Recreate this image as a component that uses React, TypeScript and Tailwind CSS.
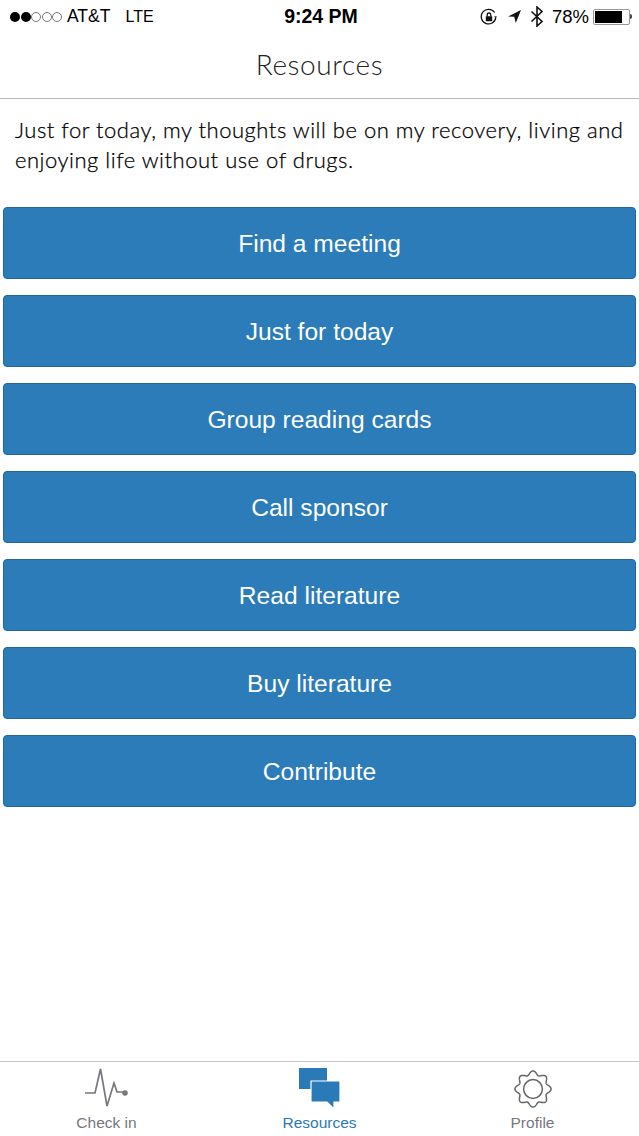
const resources = [
  'Find a meeting',
  'Just for today',
  'Group reading cards',
  'Call sponsor',
  'Read literature',
  'Buy literature',
  'Contribute',
];

function gearPath() {
  const points: string[] = [];
  for (let i = 0; i < 240; i++) {
    const t = (i / 240) * Math.PI * 2;
    const r = 16.2 + 1.9 * Math.cos(8 * t);
    points.push(`${(20 + r * Math.sin(t)).toFixed(2)},${(20 - r * Math.cos(t)).toFixed(2)}`);
  }
  return `M${points.join('L')}Z`;
}

function StatusBar() {
  return (
    <div className="flex h-[32px] items-center justify-between pl-[10px] pr-[7px] pt-[1px] font-['Liberation_Sans',sans-serif] text-[17.5px] text-black">
      <div className="flex w-[220px] items-center">
        <div className="flex items-center gap-[0.5px]">
          <span className="size-[10px] rounded-full bg-black" />
          <span className="size-[10px] rounded-full bg-black" />
          <span className="size-[10px] rounded-full border border-[#777]" />
          <span className="size-[10px] rounded-full border border-[#777]" />
          <span className="size-[10px] rounded-full border border-[#777]" />
        </div>
        <span className="ml-[5px]">AT&amp;T</span>
        <span className="ml-[15px] text-[16px]">LTE</span>
      </div>
      <div className="text-[19.5px] font-bold">9:24 PM</div>
      <div className="flex w-[220px] items-center justify-end">
        <svg width="18" height="18" viewBox="0 0 18 18" fill="none" stroke="#111" strokeWidth="1.3">
          <path d="M15.8 9.6A7.3 7.3 0 1 1 14.6 4.5" />
          <path d="M16.9 8.2l-1.2 2-1.7-1.6" fill="#111" stroke="none" />
          <rect x="5.8" y="8.2" width="6.4" height="5" rx="0.6" fill="#111" stroke="none" />
          <path d="M7.2 8.4V6.8a1.8 1.8 0 0 1 3.6 0v1.6" />
        </svg>
        <svg className="ml-[9px]" width="15" height="15" viewBox="0 0 15 15" fill="#111">
          <path d="M14 1L8.8 14 7.2 7.8 1 7.4z" />
        </svg>
        <svg className="ml-[8px]" width="14" height="21" viewBox="0 0 14 21" fill="none" stroke="#111" strokeWidth="1.6">
          <path d="M1.5 5.5l10.5 10L7 20V1l5 4.5L1.5 15.5" />
        </svg>
        <span className="ml-[8px] text-[18.5px]">78%</span>
        <div className="ml-[4px] flex items-center">
          <div className="h-[16px] w-[37px] rounded-[2px] border border-[#999] bg-white p-[1px]">
            <div className="h-full w-[27px] bg-black" />
          </div>
          <div className="h-[5px] w-[2px] rounded-r-[2px] bg-[#444]" />
        </div>
      </div>
    </div>
  );
}

function TabItem({ label, active, icon }: { label: string; active?: boolean; icon: React.ReactNode }) {
  return (
    <div className={`flex flex-col items-center pt-[4px] ${active ? 'text-[#2a7ab8]' : 'text-[#77777c]'}`}>
      <div className="flex h-[46px] items-center justify-center">{icon}</div>
      <span className="mt-[2px] text-[15.5px] leading-[18px]">{label}</span>
    </div>
  );
}

export default function App() {
  return (
    <div className="flex h-[1136px] w-[639px] flex-col overflow-hidden bg-white">
      <StatusBar />
      <header className="flex h-[67px] items-center justify-center border-b border-[#b9b9bb] pb-[2px] font-['Lato',sans-serif] text-[28px] font-light tracking-[0.6px] text-[#222]">
        Resources
      </header>
      <p className="px-[15px] pt-[16px] font-['Lato',sans-serif] text-[22px] font-light leading-[30px] tracking-[0.52px] text-black [-webkit-text-stroke:0.25px_black]">
        Just for today, my thoughts will be on my recovery, living and enjoying life without use of drugs.
      </p>
      <div className="mt-[32px] flex flex-col gap-[16px] px-[3px]">
        {resources.map((label) => (
          <button
            key={label}
            className="h-[72px] rounded-[4px] border border-[#22689f] bg-[#2b7cb9] pt-[3px] font-['Liberation_Sans',sans-serif] text-[24.6px] text-white"
          >
            {label}
          </button>
        ))}
      </div>
      <nav className="mt-auto grid h-[75px] grid-cols-3 border-t border-[#c4c4c6] font-['Liberation_Sans',sans-serif]">
        <TabItem
          label="Check in"
          icon={
            <svg width="46" height="42" viewBox="0 0 46 42" fill="none" stroke="#77777c" strokeWidth="1.7">
              <path d="M1 25h10l5.5-24 6.5 37 7-23 3 9h9" />
              <circle cx="41" cy="25" r="2.8" fill="#77777c" stroke="none" />
            </svg>
          }
        />
        <TabItem
          label="Resources"
          active
          icon={
            <svg width="42" height="42" viewBox="0 0 42 42" fill="#2a7ab8">
              <path d="M0 0h28v13H12v8H0z" />
              <path d="M12 13h29v21h-6v7l-7-7H12z" stroke="#fff" strokeWidth="1.2" />
            </svg>
          }
        />
        <TabItem
          label="Profile"
          icon={
            <svg width="40" height="40" viewBox="0 0 40 40" fill="none" stroke="#66666a" strokeWidth="1.5">
              <path d={gearPath()} />
              <circle cx="20" cy="20" r="9.4" />
            </svg>
          }
        />
      </nav>
    </div>
  );
}
